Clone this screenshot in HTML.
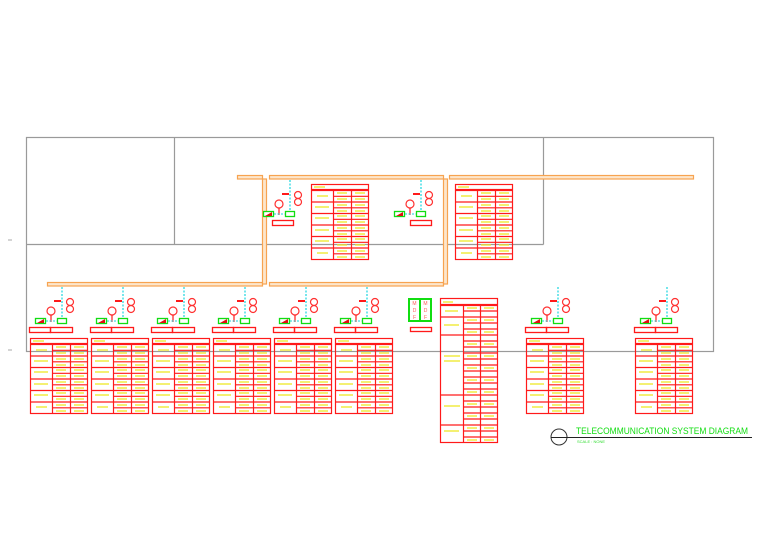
<!DOCTYPE html>
<html><head><style>
html,body{margin:0;padding:0;background:#fff;width:768px;height:543px;overflow:hidden}
svg{display:block}
</style></head><body>
<svg width="768" height="543" viewBox="0 0 768 543" xmlns="http://www.w3.org/2000/svg">
<defs>
<g id="tb" fill="none" stroke="#ff1a1a" stroke-width="1.2">
  <rect x="0.5" y="0.5" width="57" height="5" fill="#fff"/>
  <rect x="0.5" y="6.5" width="57" height="69"/>
  <path d="M22.5 6.5V75.5M40.5 6.5V75.5"/>
  <path d="M22.5 12.3H57.5M0.5 18H57.5M22.5 23.8H57.5M0.5 29.5H57.5M22.5 35.3H57.5M0.5 41H57.5M22.5 46.8H57.5M0.5 52.5H57.5M22.5 58.3H57.5M0.5 64H57.5M22.5 69.8H57.5"/>
  <g stroke="#f0e830" stroke-width="1.5" opacity=".9">
    <path d="M3 3H14M6 12H17M4 23H18M4 34H18M4 46H18M4 57H18M6 69H17M26 9H36M44 9H54M26 15H36M44 15H54M26 21H36M44 21H54M26 27H36M44 27H54M26 32H36M44 32H54M26 38H36M44 38H54M26 44H36M44 44H54M26 50H36M44 50H54M26 55H36M44 55H54M26 61H36M44 61H54M26 67H36M44 67H54M26 73H36M44 73H54"/>
  </g>
</g>
<g id="ic">
  <path d="M0 0V33" stroke="#19d6e0" stroke-width="1.2" stroke-dasharray="2 1.5"/>
  <path d="M-8 14H-1" stroke="#ff1a1a" stroke-width="2"/>
  <circle cx="8" cy="15" r="3.5" fill="none" stroke="#ff3030" stroke-width="1.2"/>
  <circle cx="8" cy="22" r="3.5" fill="none" stroke="#ff3030" stroke-width="1.2"/>
  <circle cx="-11" cy="24" r="4" fill="none" stroke="#ff3030" stroke-width="1.2"/>
  <path d="M-11 28V35" stroke="#ff1a1a" stroke-width="1.2"/>
  <path d="M-16 34H-4" stroke="#19d6e0" stroke-dasharray="2 1.5"/>
  <rect x="-26.5" y="31.5" width="10" height="5" fill="#fff" stroke="#11dd11" stroke-width="1.3"/>
  <path d="M-25 36L-18 32V36Z" fill="#e01010"/>
  <rect x="-4.5" y="31.5" width="9" height="5" fill="#fff" stroke="#11dd11" stroke-width="1.3"/>
</g>
<g id="lb" fill="none" stroke="#ff1a1a" stroke-width="1.3">
  <rect x="0.5" y="0.5" width="21" height="5"/><rect x="21.5" y="0.5" width="22" height="5"/>
</g>
</defs>

<g fill="none" stroke="#9a9a9a" stroke-width="1.2">
  <rect x="26.5" y="137.5" width="687" height="214"/>
  <path d="M174.5 137.5V244.5M26.5 244.5H543.5M543.5 137.5V244.5"/>
</g>
<path d="M8 240h4M8 350h4" stroke="#aaa"/>

<g fill="#fde6cc" stroke="#f7a350" stroke-width="1.2">
  <rect x="237.5" y="175.5" width="25" height="3.5"/>
  <rect x="269.5" y="175.5" width="174" height="3.5"/>
  <rect x="449.5" y="175.5" width="244" height="3.5"/>
  <rect x="47.5" y="282.5" width="215" height="3.5"/>
  <rect x="269.5" y="282.5" width="174" height="3.5"/>
  <rect x="262.5" y="179" width="4" height="105"/>
  <rect x="443.5" y="179" width="4" height="105"/>
</g>

<g id="pn">
  <use href="#ic" x="62" y="287"/>
  <use href="#lb" x="29" y="327"/>
  <use href="#tb" x="30" y="338"/>
</g>
<use href="#pn" x="61"/><use href="#pn" x="122"/><use href="#pn" x="183"/>
<use href="#pn" x="244"/><use href="#pn" x="305"/><use href="#pn" x="496"/><use href="#pn" x="605"/>

<use href="#ic" x="290" y="180"/>
<rect x="272.5" y="220.5" width="21" height="5" fill="none" stroke="#ff1a1a" stroke-width="1.3"/>
<use href="#tb" x="311" y="184"/>
<use href="#ic" x="421" y="180"/>
<rect x="410.5" y="220.5" width="21" height="5" fill="none" stroke="#ff1a1a" stroke-width="1.3"/>
<use href="#tb" x="455" y="184"/>

<g fill="#fff" stroke="#11dd11" stroke-width="2">
  <rect x="409" y="299" width="11" height="22"/><rect x="420" y="299" width="11" height="22"/>
</g>
<g font-family="Liberation Sans, sans-serif" font-size="5" fill="#ff6060" text-anchor="middle">
  <text x="414.5" y="305">M</text><text x="414.5" y="312">D</text><text x="414.5" y="319">F</text>
  <text x="425.5" y="305">M</text><text x="425.5" y="312">D</text><text x="425.5" y="319">F</text>
</g>
<rect x="410.5" y="327.5" width="21" height="4" fill="none" stroke="#ff1a1a" stroke-width="1.3"/>

<g fill="none" stroke="#ff1a1a" stroke-width="1.2">
  <rect x="440.5" y="298.5" width="57" height="6"/>
  <rect x="440.5" y="305.5" width="57" height="137"/>
  <path d="M463.5 305.5V442.5M480.5 305.5V442.5"/>
  <path d="M463.5 311H497.5M440.5 317H497.5M463.5 323H497.5M463.5 329H497.5M440.5 335H497.5M463.5 341H497.5M463.5 347H497.5M463.5 353H497.5M463.5 359H497.5M463.5 365H497.5M463.5 371H497.5M463.5 377H497.5M463.5 383H497.5M463.5 389H497.5M440.5 395H497.5M463.5 401H497.5M463.5 407H497.5M463.5 413H497.5M463.5 419H497.5M440.5 425H497.5M463.5 431H497.5M463.5 437H497.5"/>
  <g stroke="#f0e830" stroke-width="1.5" opacity=".9"><path d="M443 302H453M445 311H458M444 325H459M444 356H460M444 361H460M444 406H460M444 431H459M467 308H477M484 308H494M467 320H477M484 320H494M467 332H477M484 332H494M467 344H477M484 344H494M467 356H477M484 356H494M467 368H477M484 368H494M467 380H477M484 380H494M467 392H477M484 392H494M467 404H477M484 404H494M467 416H477M484 416H494M467 428H477M484 428H494M467 440H477M484 440H494"/></g>
</g>

<circle cx="559" cy="437" r="8" fill="none" stroke="#333"/>
<path d="M551 437.5H752" stroke="#222"/>
<text x="576" y="434" font-family="Liberation Sans, sans-serif" font-size="9" fill="#11dd11" textLength="172" lengthAdjust="spacingAndGlyphs">TELECOMMUNICATION SYSTEM DIAGRAM</text>
<text x="577" y="443" font-family="Liberation Sans, sans-serif" font-size="4" fill="#33dd33">SCALE : NONE</text>
</svg>
</body></html>
